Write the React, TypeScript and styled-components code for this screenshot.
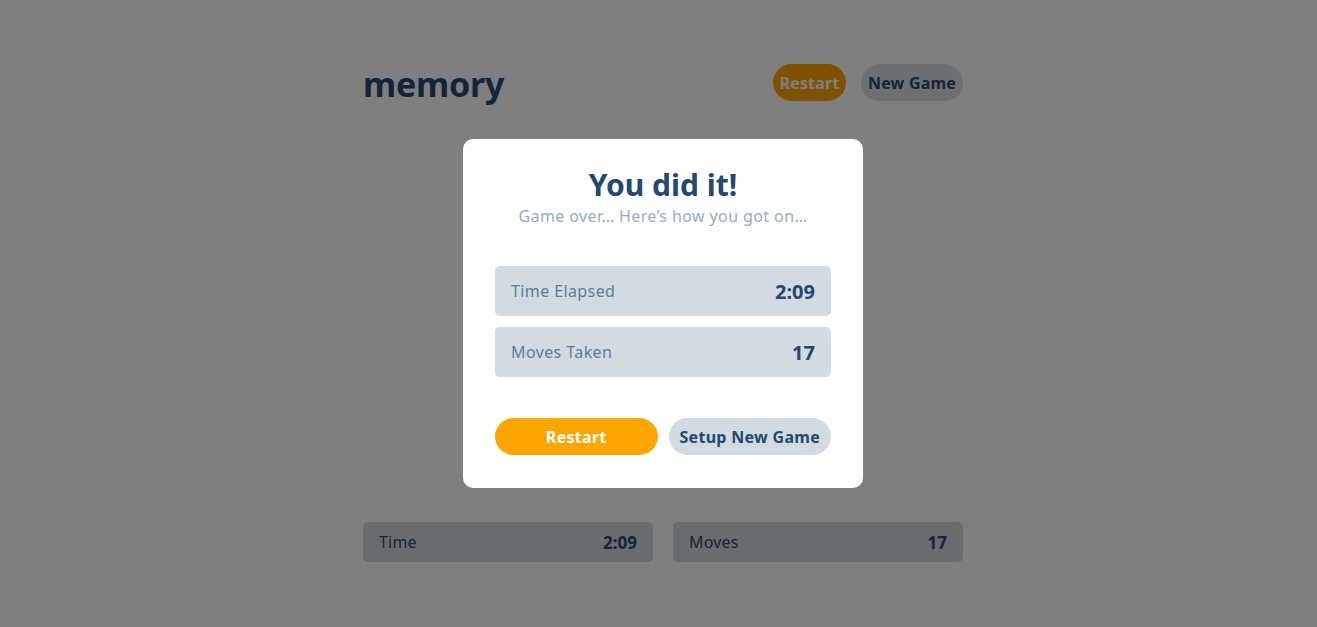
import React from "react";
import styled, { createGlobalStyle } from "styled-components";

const Global = createGlobalStyle`
  html, body { margin: 0; padding: 0; background: #fefefe; }
  body { font-family: "Noto Sans", "Open Sans", sans-serif; }
  * { box-sizing: border-box; }
`;

const Page = styled.div`
  min-height: 627px;
  padding: 64px 0 0 9px;
`;

const Container = styled.div`
  width: 600px;
  margin: 0 auto;
  display: flex;
  flex-direction: column;
`;

const Header = styled.header`
  height: 37px;
  display: flex;
  align-items: center;
  justify-content: space-between;
`;

const Logo = styled.h1`
  margin: 0;
  font-size: 34px;
  font-weight: 700;
  color: #264a74;
  letter-spacing: -0.2px;
  padding-top: 2px;
`;

const Actions = styled.div`
  display: flex;
  gap: 15px;
`;

const Pill = styled.button<{ $primary?: boolean; $wide?: boolean }>`
  height: 37px;
  border: none;
  border-radius: 19px;
  padding: 0 6px;
  min-width: ${(p) => (p.$wide ? "102px" : "73px")};
  font-family: inherit;
  font-size: 16px;
  letter-spacing: 0.2px;
  font-weight: 700;
  cursor: pointer;
  background: ${(p) => (p.$primary ? "#ffa500" : "#d8e0e6")};
  color: ${(p) => (p.$primary ? "#ffffff" : "#264a74")};
`;

const Board = styled.div`
  height: 421px;
`;

const StatsRow = styled.div`
  display: grid;
  grid-template-columns: 1fr 1fr;
  gap: 20px;
`;

const StatBox = styled.div`
  height: 40px;
  border-radius: 5px;
  background: #ced8de;
  display: flex;
  align-items: center;
  justify-content: space-between;
  padding: 0 16px;
`;

const StatLabel = styled.span`
  font-size: 16px;
  letter-spacing: 0.2px;
  color: #304a66;
`;

const StatValue = styled.span`
  font-size: 17px;
  font-weight: 700;
  color: #264a74;
`;

const Overlay = styled.div`
  position: fixed;
  inset: 0;
  background: rgba(0, 0, 0, 0.5);
  display: flex;
  align-items: center;
  justify-content: center;
  padding-left: 9px;
`;

const Modal = styled.div`
  width: 400px;
  height: 349px;
  background: #ffffff;
  border-radius: 10px;
  padding: 30px 32px 32px;
  display: flex;
  flex-direction: column;
  align-items: stretch;
`;

const Title = styled.h2`
  margin: 0;
  text-align: center;
  font-size: 30px;
  line-height: 32px;
  font-weight: 700;
  color: #24486e;
`;

const Subtitle = styled.p`
  margin: 4px 0 0;
  text-align: center;
  font-size: 16px;
  letter-spacing: 0.4px;
  line-height: 22px;
  color: #97abbf;
`;

const Results = styled.div`
  margin-top: 39px;
  display: flex;
  flex-direction: column;
  gap: 11px;
`;

const ResultRow = styled.div`
  height: 50px;
  border-radius: 5px;
  background: #d2dbe1;
  display: flex;
  align-items: center;
  justify-content: space-between;
  padding: 0 16px;
`;

const ResultLabel = styled.span`
  font-size: 16px;
  letter-spacing: 0.4px;
  color: #5a7b9b;
`;

const ResultValue = styled.span`
  font-size: 20px;
  font-weight: 700;
  color: #24486e;
`;

const ModalActions = styled.div`
  margin-top: 41px;
  display: grid;
  grid-template-columns: 1fr 1fr;
  gap: 11px;
`;

const ModalButton = styled.button<{ $primary?: boolean }>`
  height: 37px;
  border: none;
  border-radius: 19px;
  padding: 0;
  font-family: inherit;
  font-size: 16px;
  letter-spacing: 0.3px;
  font-weight: 700;
  cursor: pointer;
  background: ${(p) => (p.$primary ? "#ffa500" : "#d2dbe1")};
  color: ${(p) => (p.$primary ? "#ffffff" : "#24486e")};
`;

export default function App() {
  return (
    <>
      <Global />
      <Page>
        <Container>
          <Header>
            <Logo>memory</Logo>
            <Actions>
              <Pill $primary>Restart</Pill>
              <Pill $wide>New Game</Pill>
            </Actions>
          </Header>
          <Board />
          <StatsRow>
            <StatBox>
              <StatLabel>Time</StatLabel>
              <StatValue>2:09</StatValue>
            </StatBox>
            <StatBox>
              <StatLabel>Moves</StatLabel>
              <StatValue>17</StatValue>
            </StatBox>
          </StatsRow>
        </Container>
      </Page>
      <Overlay>
        <Modal>
          <Title>You did it!</Title>
          <Subtitle>Game over… Here’s how you got on…</Subtitle>
          <Results>
            <ResultRow>
              <ResultLabel>Time Elapsed</ResultLabel>
              <ResultValue>2:09</ResultValue>
            </ResultRow>
            <ResultRow>
              <ResultLabel>Moves Taken</ResultLabel>
              <ResultValue>17</ResultValue>
            </ResultRow>
          </Results>
          <ModalActions>
            <ModalButton $primary>Restart</ModalButton>
            <ModalButton>Setup New Game</ModalButton>
          </ModalActions>
        </Modal>
      </Overlay>
    </>
  );
}
